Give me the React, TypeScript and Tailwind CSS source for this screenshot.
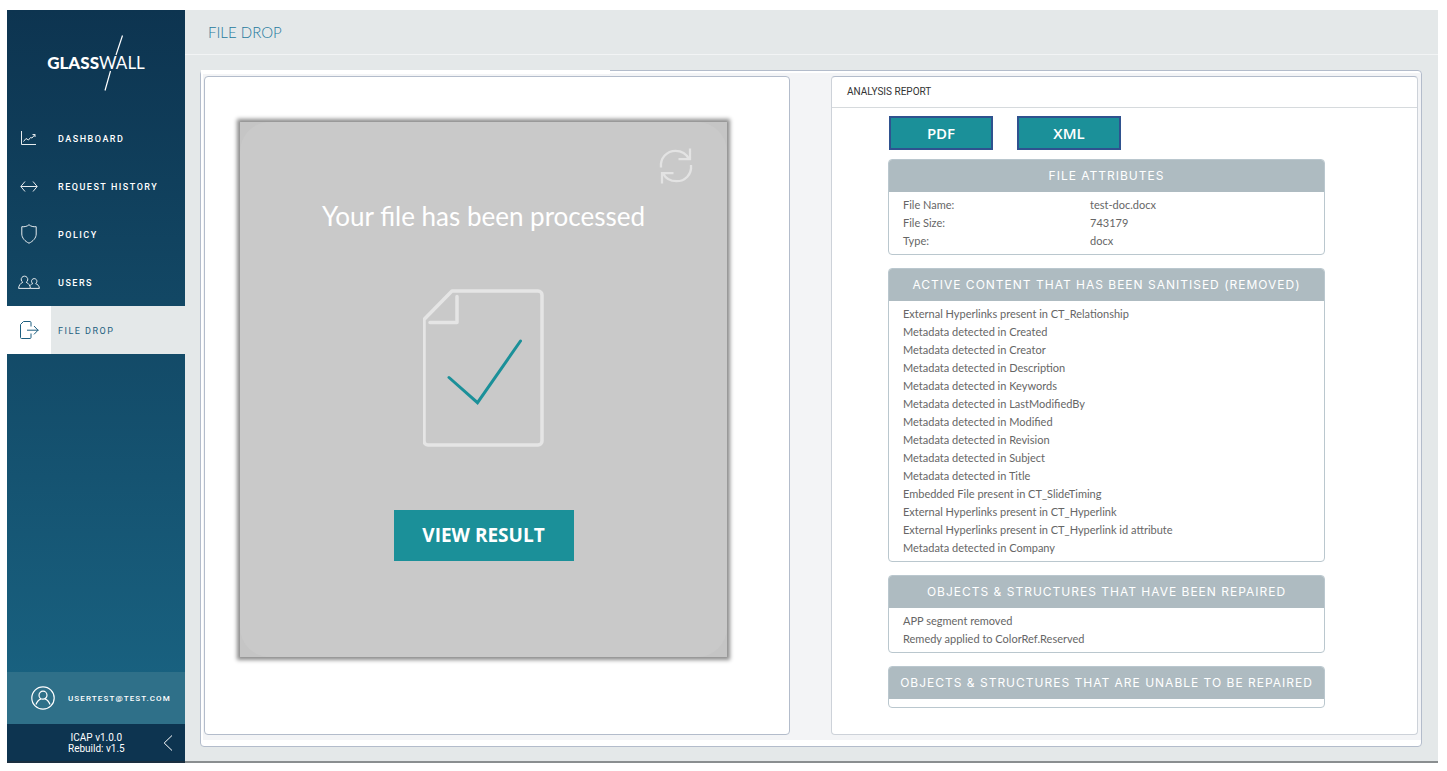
import type { ReactNode } from "react";

type NavItem = { label: string; icon: ReactNode; active?: boolean };

const navItems: NavItem[] = [
  {
    label: "DASHBOARD",
    icon: (
      <svg width="16" height="16" viewBox="0 0 16 16" fill="none" stroke="currentColor" strokeWidth="1">
        <path d="M.5 1v13.5H15" />
        <path d="M2.500 11.500 5 8.500l2.500 1.500 2-2.500 1.500.5 3-3.500M11.500 4.500H14V7" />
      </svg>
    ),
  },
  {
    label: "REQUEST HISTORY",
    icon: (
      <svg width="18" height="11" viewBox="0 0 18 11" fill="none" stroke="currentColor" strokeWidth="1">
        <path d="M1 5.500h16M5 .5 .8 5.500 5 10.500M13 .5l4.200 5L13 10.500" />
      </svg>
    ),
  },
  {
    label: "POLICY",
    icon: (
      <svg width="16" height="20" viewBox="0 0 16 20" fill="none" stroke="currentColor" strokeWidth="1">
        <path d="M8 .7C6.500 2.300 3.500 3 .8 2.700V10c0 4 3.200 7.300 7.200 9.200 4-1.900 7.200-5.200 7.200-9.200V2.700C12.500 3 9.500 2.300 8 .7Z" />
      </svg>
    ),
  },
  {
    label: "USERS",
    icon: (
      <svg width="22" height="14" viewBox="0 0 22 14" fill="none" stroke="currentColor" strokeWidth="1">
        <path d="M4.800 7.300a3.300 3.300 0 1 1 3.400 0M4.800 7.300C2.500 8.300.8 10.300.6 13.400h11.800c-.2-3.100-1.900-5.100-4.200-6.100" />
        <path d="M14.800 8.600a2.700 2.700 0 1 1 2.800 0M14.800 8.600c-1 .3-1.900.9-2.600 1.800M17.600 8.600c2.100.7 3.600 2.300 3.800 4.800h-9" />
      </svg>
    ),
  },
  {
    label: "FILE DROP",
    active: true,
    icon: (
      <svg width="20" height="18" viewBox="0 0 20 18" fill="none" stroke="currentColor" strokeWidth="1">
        <path d="M12 5.500v-4c0-.6-.4-1-1-1H4.500L1.500 3.500v13c0 .6.400 1 1 1H11c.6 0 1-.4 1-1v-4" />
        <path d="M8 9.200h11.500M15 5l4 4.200-4 4.200" />
      </svg>
    ),
  },
];

const attributes = [
  ["File Name:", "test-doc.docx"],
  ["File Size:", "743179"],
  ["Type:", "docx"],
];

const sanitised = [
  "External Hyperlinks present in CT_Relationship",
  "Metadata detected in Created",
  "Metadata detected in Creator",
  "Metadata detected in Description",
  "Metadata detected in Keywords",
  "Metadata detected in LastModifiedBy",
  "Metadata detected in Modified",
  "Metadata detected in Revision",
  "Metadata detected in Subject",
  "Metadata detected in Title",
  "Embedded File present in CT_SlideTiming",
  "External Hyperlinks present in CT_Hyperlink",
  "External Hyperlinks present in CT_Hyperlink id attribute",
  "Metadata detected in Company",
];

const repaired = ["APP segment removed", "Remedy applied to ColorRef.Reserved"];

function Logo() {
  return (
    <div className="relative flex h-[104px] items-center justify-center pt-0.5 text-white">
      <span className="font-['Lato',sans-serif] text-[17px] leading-5">
        <span className="font-black">GLASS</span>
        <span className="font-normal">WALL</span>
      </span>
      <svg className="absolute top-6 left-24" width="24" height="58" viewBox="0 0 24 58" stroke="white" strokeWidth="1.200">
        <path d="M19.500 1.500 13 21M7.500 37 2 56.500" />
      </svg>
    </div>
  );
}

function Sidebar() {
  return (
    <aside className="flex w-[178px] shrink-0 flex-col border-b-2 border-[#1b2f40] bg-linear-to-b from-[#0d3450] to-[#1a6786] font-['Roboto',sans-serif] text-white">
      <Logo />
      <nav>
        {navItems.map((item) => (
          <a
            key={item.label}
            href="#"
            className={
              item.active
                ? "flex h-12 items-center bg-[#e4e8e9] text-[#1d5f80]"
                : "flex h-12 items-center text-white"
            }
          >
            <span
              className={
                item.active
                  ? "flex h-full w-11 items-center justify-center bg-white"
                  : "flex h-full w-11 items-center justify-center opacity-90"
              }
            >
              {item.icon}
            </span>
            <span
              className={
                item.active
                  ? "pt-1 pl-[7px] text-[9px] tracking-[1.5px]"
                  : "pt-1 pl-[7px] text-[9px] font-medium tracking-[1.5px]"
              }
            >
              {item.label}
            </span>
          </a>
        ))}
      </nav>
      <div className="mt-auto flex h-[52px] items-center bg-[#2f7089] pl-6">
        <svg width="24" height="24" viewBox="0 0 24 24" fill="none" stroke="currentColor" strokeWidth="1.200">
          <circle cx="12" cy="12" r="11.200" />
          <circle cx="12" cy="9.200" r="4" />
          <path d="M5 18.500c1-3 2.800-4.800 5-5.600M19 18.500c-1-3-2.800-4.800-5-5.600" />
        </svg>
        <span className="pt-0.5 pl-[13px] text-[8px] font-medium tracking-[0.14em]">USERTEST@TEST.COM</span>
      </div>
      <div className="flex h-[37px] items-center justify-between bg-[#0d3450] pr-3 pl-[61px]">
        <p className="text-center text-[10px] leading-[11px]">
          ICAP v1.0.0
          <br />
          Rebuild: v1.5
        </p>
        <button type="button" aria-label="Collapse menu">
          <svg width="10" height="16" viewBox="0 0 10 16" fill="none" stroke="currentColor" strokeWidth="1">
            <path d="M9 .5 1.200 8 9 15.500" />
          </svg>
        </button>
      </div>
    </aside>
  );
}

function ResultPanel() {
  return (
    <section className="flex rounded border border-[#b3bccb] bg-white pt-[45px] pr-[62px] pb-[77px] pl-[35px]">
      <div className="flex flex-1 bg-[#c5c5c5] shadow-[0_0_4px_3px_rgba(0,0,0,0.45)]">
        <div className="flex flex-1 flex-col items-center rounded-[30px] bg-[#c9c9c9]">
          <button type="button" aria-label="Start again" className="mt-[26px] mr-[34px] self-end text-[#e3e3e3]">
            <svg width="34" height="36" viewBox="0 0 34 36" fill="none" stroke="currentColor" strokeWidth="2.300">
              <path d="M2 19.500C1 10 8 2.800 16.500 2.800c6.500 0 11 3.200 13.500 8.200M31 .5v10.700H19.500" />
              <path d="M32 17c1 9.500-6 16.200-14.500 16.200-6.500 0-11-3-13.500-8M3 35.500V25.200h11.500" />
            </svg>
          </button>
          <h2 className="mt-4 font-['Lato',sans-serif] text-[26px] leading-8 font-normal text-white">
            Your file has been processed
          </h2>
          <svg className="mt-[57px]" width="122" height="158" viewBox="0 0 122 158" fill="none">
            <g stroke="#e5e5e5" strokeWidth="3.500" strokeLinecap="round" strokeLinejoin="round">
              <path d="M29 2h86a4 4 0 0 1 4 4v146a4 4 0 0 1-4 4H5a4 4 0 0 1-4-4V30.500Z" />
              <path d="M34 7.500v26H7" />
            </g>
            <path d="m26 88.500 28.500 25.200L97.500 52" stroke="#1b9099" strokeWidth="3" strokeLinecap="round" />
          </svg>
          <button
            type="button"
            className="mt-[63px] h-[51px] w-[180px] bg-[#1b9099] font-['Open_Sans',sans-serif] text-[19px] font-bold text-white"
          >
            VIEW RESULT
          </button>
        </div>
      </div>
    </section>
  );
}

function ReportCard({ title, children }: { title: string; children?: ReactNode }) {
  return (
    <section className="overflow-hidden rounded border border-[#bac7ce] bg-white">
      <h3 className="h-8 bg-[#aebbc1] text-center font-['Inter',sans-serif] text-[12px] leading-8 tracking-[1px] whitespace-nowrap text-white">
        {title}
      </h3>
      <div className="px-3.5 py-1 font-['Lato',sans-serif] text-[11px] leading-[18px] text-[#666666]">
        {children}
      </div>
    </section>
  );
}

function ReportPanel() {
  return (
    <section className="rounded border border-[#cdd2d9] border-t-[#b3bccb] bg-white">
      <h2 className="border-b border-[#d6dadd] pl-[15px] font-['Roboto',sans-serif] text-[10px] leading-[30px] text-[#333333]">
        ANALYSIS REPORT
      </h2>
      <div className="pt-2 pr-[92px] pl-14">
        <div className="flex gap-6 pl-px">
          {["PDF", "XML"].map((format) => (
            <button
              key={format}
              type="button"
              className="h-[34px] w-[104px] border-2 border-[#2f528f] bg-[#1b9099] font-['Open_Sans',sans-serif] text-[15px] font-semibold text-white"
            >
              {format}
            </button>
          ))}
        </div>
        <div className="mt-[9px] flex flex-col gap-[13px]">
          <ReportCard title="FILE ATTRIBUTES">
            <table className="w-full table-fixed text-left">
              <tbody>
                {attributes.map(([name, value]) => (
                  <tr key={name}>
                    <th scope="row" className="w-[187px] p-0 font-normal">
                      {name}
                    </th>
                    <td className="p-0">{value}</td>
                  </tr>
                ))}
              </tbody>
            </table>
          </ReportCard>
          <ReportCard title="ACTIVE CONTENT THAT HAS BEEN SANITISED (REMOVED)">
            <ul>
              {sanitised.map((entry) => (
                <li key={entry}>{entry}</li>
              ))}
            </ul>
          </ReportCard>
          <ReportCard title="OBJECTS & STRUCTURES THAT HAVE BEEN REPAIRED">
            <ul>
              {repaired.map((entry) => (
                <li key={entry}>{entry}</li>
              ))}
            </ul>
          </ReportCard>
          <ReportCard title="OBJECTS & STRUCTURES THAT ARE UNABLE TO BE REPAIRED" />
        </div>
      </div>
    </section>
  );
}

export default function App() {
  return (
    <div className="flex min-h-screen bg-white pt-2.5 pr-[9px] pb-2 pl-[7px]">
      <Sidebar />
      <main className="flex min-w-0 flex-1 flex-col border-b-2 border-[#8a8e90] bg-[#e4e8e9]">
        <header className="border-b border-[#f2f4f5] pl-[23px]">
          <h1 className="font-['Lato',sans-serif] text-[15px] leading-[44px] font-light text-[#1f7a9e]">FILE DROP</h1>
        </header>
        <div className="relative mt-[15px] mr-4 mb-3.5 ml-[15px] flex flex-1 flex-col rounded border border-[#b3bccb] bg-white pt-0.5 pb-1.5 pl-0.5">
          <div className="absolute -top-px left-0 h-1 w-[409px] bg-white" />
          <div className="grid flex-1 grid-cols-[586fr_587fr] gap-[41px] bg-[#f3f4f6] pt-[3px] pr-[3px] pb-[5px] pl-px">
            <ResultPanel />
            <ReportPanel />
          </div>
        </div>
      </main>
    </div>
  );
}
